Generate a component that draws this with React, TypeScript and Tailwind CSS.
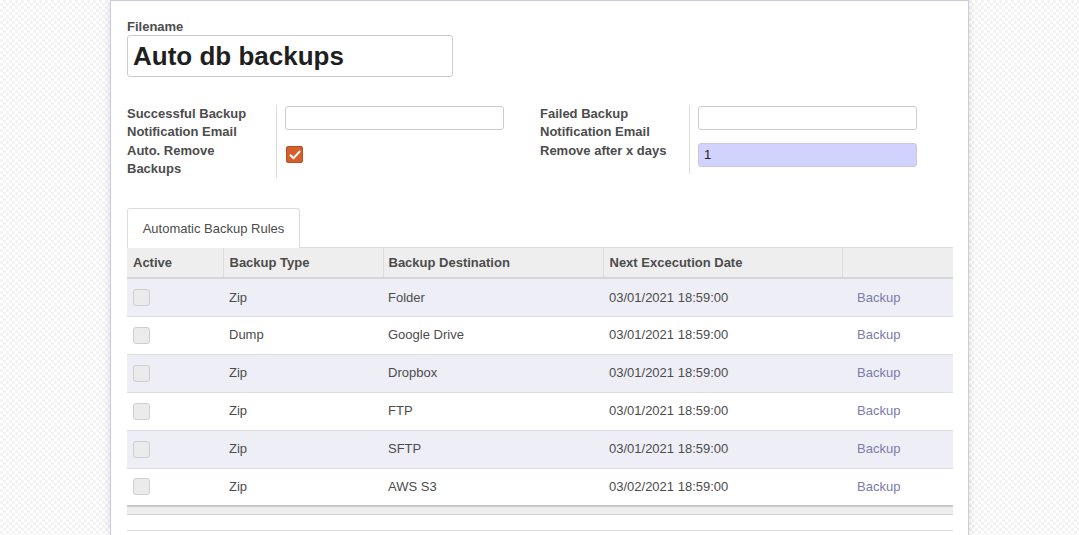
import React from "react";

const rows = [
  { type: "Zip", dest: "Folder", date: "03/01/2021 18:59:00" },
  { type: "Dump", dest: "Google Drive", date: "03/01/2021 18:59:00" },
  { type: "Zip", dest: "Dropbox", date: "03/01/2021 18:59:00" },
  { type: "Zip", dest: "FTP", date: "03/01/2021 18:59:00" },
  { type: "Zip", dest: "SFTP", date: "03/01/2021 18:59:00" },
  { type: "Zip", dest: "AWS S3", date: "03/02/2021 18:59:00" },
];

function CheckedBox() {
  return (
    <span className="flex h-[17px] w-[17px] items-center justify-center rounded-[3px] bg-[#d5602e] shadow-[inset_0_0_0_1px_#b9501f]">
      <svg width="12" height="10" viewBox="0 0 12 10" fill="none">
        <path d="M1.5 5.2 L4.6 8.2 L10.5 1.6" stroke="white" strokeWidth="2" strokeLinecap="round" strokeLinejoin="round" />
      </svg>
    </span>
  );
}

function EmptyBox() {
  return <span className="block h-[17px] w-[17px] rounded-[3px] border border-[#cfcfcf] bg-[#ebebeb]" />;
}

export default function App() {
  return (
    <div
      className="h-[535px] w-full overflow-hidden bg-[repeating-conic-gradient(#f3f3f3_0_25%,#ffffff_0_50%)] bg-[length:6px_6px] font-['Liberation_Sans',Arial,sans-serif] text-[13px] text-[#4c4c4c]"
    >
      <div className="mx-auto h-full w-[859px] border-x border-t border-[#cdccd8] bg-white pl-[16px] pr-[15px] pt-[17px] shadow-[0_0_8px_rgba(0,0,0,0.12)]">
        {/* Title */}
        <div className="font-bold leading-[18px] text-[#4c4c4c]">Filename</div>
        <div className="-mt-px flex h-[42px] w-[326px] items-center rounded-[3px] border border-[#cccccc] px-[5px] text-[26px] font-bold text-[#1f1f1f]">
          Auto db backups
        </div>

        {/* Settings groups */}
        <div className="mt-[28px] flex">
          <div className="w-[413px]">
            <div className="flex">
              <div className="w-[150px] border-r border-[#dddddd] font-bold leading-[18px]">
                Successful Backup
                <br />
                Notification Email
              </div>
              <div className="pl-[8px] pt-px">
                <div className="h-[24px] w-[219px] rounded-[3px] border border-[#cccccc]" />
              </div>
            </div>
            <div className="flex">
              <div className="w-[150px] border-r border-[#dddddd] pt-px font-bold leading-[18px]">
                Auto. Remove
                <br />
                Backups
              </div>
              <div className="pl-[9px] pt-[5px]">
                <CheckedBox />
              </div>
            </div>
          </div>
          <div className="w-[413px]">
            <div className="flex">
              <div className="w-[150px] border-r border-[#dddddd] font-bold leading-[18px]">
                Failed Backup
                <br />
                Notification Email
              </div>
              <div className="pl-[8px] pt-px">
                <div className="h-[24px] w-[219px] rounded-[3px] border border-[#cccccc]" />
              </div>
            </div>
            <div className="flex">
              <div className="h-[33px] w-[150px] border-r border-[#dddddd] pt-px font-bold leading-[18px]">
                Remove after x days
              </div>
              <div className="pl-[8px] pt-[2px]">
                <div className="flex h-[24px] w-[219px] items-center rounded-[3px] border border-[#c8c8e0] bg-[#d2d2ff] px-[5px] text-[#222]">
                  1
                </div>
              </div>
            </div>
          </div>
        </div>

        {/* Tabs */}
        <div className="mt-[30px] flex">
          <div className="flex h-[40px] w-[173px] items-center justify-center rounded-t-[3px] border border-b-0 border-[#dddddd] bg-white text-[#4c4c4c]">
            Automatic Backup Rules
          </div>
          <div className="flex-1 border-b border-[#dddddd]" />
        </div>

        {/* Table */}
        <table className="w-[826px] table-fixed border-collapse">
          <colgroup>
            <col className="w-[96px]" />
            <col className="w-[160px]" />
            <col className="w-[220px]" />
            <col className="w-[239px]" />
            <col className="w-[111px]" />
          </colgroup>
          <thead>
            <tr className="h-[30px] border-b-2 border-[#d6d6d6] bg-[#eeeeee] text-left font-bold">
              <th className="border-r border-[#dddddd] px-[6px]">Active</th>
              <th className="border-r border-[#dddddd] px-[6px]">Backup Type</th>
              <th className="border-r border-[#dddddd] px-[5px]">Backup Destination</th>
              <th className="border-r border-[#dddddd] px-[6px]">Next Excecution Date</th>
              <th />
            </tr>
          </thead>
          <tbody>
            {rows.map((r, i) => (
              <tr
                key={i}
                className={`h-[38px] border-b border-[#dddddd] ${i % 2 === 0 ? "bg-[#eeeef6]" : "bg-white"}`}
              >
                <td className="pl-[6px]">
                  <EmptyBox />
                </td>
                <td className="px-[6px]">{r.type}</td>
                <td className="px-[5px]">{r.dest}</td>
                <td className="px-[6px]">{r.date}</td>
                <td className="pl-[15px] text-[#7c7bad]">Backup</td>
              </tr>
            ))}
            <tr className="h-[8px] border-t-2 border-b border-t-[#c8c8c8] border-b-[#d0d0d0] bg-[#eeeeee]">
              <td colSpan={5} />
            </tr>
          </tbody>
        </table>
        <div className="mt-[15px] border-t border-[#dddddd]" />
      </div>
    </div>
  );
}
